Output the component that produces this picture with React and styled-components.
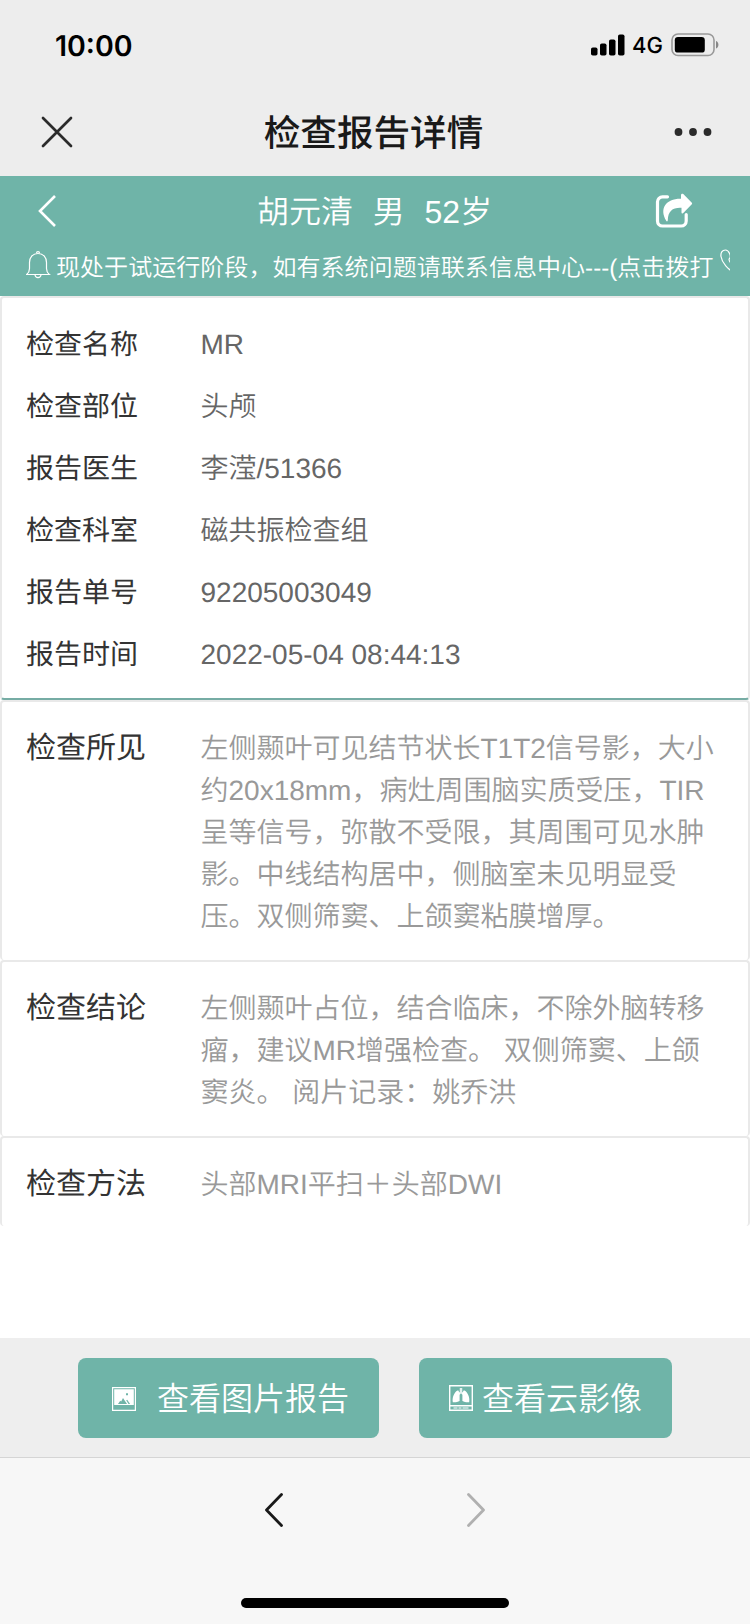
import React from 'react';
import styled, { createGlobalStyle, ThemeProvider } from 'styled-components';

const theme = {
  teal: '#6fb4a8',
  chrome: '#ededed',
  line: '#e9e9e9',
  black: '#191919',
  label: '#333',
  value: '#666',
  muted: '#999',
};

const GlobalStyle = createGlobalStyle`
  * {
    box-sizing: border-box;
  }

  body {
    margin: 0;
    background: #fff;
    font-family: 'Liberation Sans', 'Noto Sans CJK SC', sans-serif;
    text-rendering: geometricPrecision;
  }

  svg {
    display: block;
    flex: none;
  }
`;

const Page = styled.div`
  display: flex;
  flex-direction: column;
  width: 750px;
  height: 1624px;
  overflow: hidden;
`;

const StatusBar = styled.div`
  display: flex;
  align-items: center;
  justify-content: space-between;
  height: 88px;
  padding: 2px 31px 0 55px;
  background: ${props => props.theme.chrome};
  color: #000;
  font-family: Inter, sans-serif;
`;

const Clock = styled.div`
  font-size: 28.5px;
  font-weight: 600;
`;

const StatusIcons = styled.div`
  display: flex;
  align-items: center;
`;

const Network = styled.span`
  margin: 2px 8px 0 7px;
  font-size: 22px;
  font-weight: 500;
`;

const NavBar = styled.nav`
  display: flex;
  align-items: center;
  justify-content: space-between;
  height: 88px;
  padding: 0 38px 1px 41px;
  background: ${props => props.theme.chrome};
`;

const NavTitle = styled.h1`
  margin: 0;
  padding-top: 4px;
  color: ${props => props.theme.black};
  font-size: 36.6px;
  font-weight: 500;
  line-height: 50px;
`;

const Header = styled.header`
  height: 120px;
  background: ${props => props.theme.teal};
  color: #fff;
`;

const PatientBar = styled.div`
  display: flex;
  align-items: center;
  height: 70px;
  padding: 0 57px 0 38px;
`;

const Patient = styled.div`
  flex: 1;
  padding: 1px 0 0 201px;
  font-size: 32px;
  font-weight: 350;
  line-height: 44px;
  word-spacing: 1px;
  white-space: pre;
`;

const Notice = styled.div`
  display: flex;
  align-items: center;
  height: 38px;
  margin: 0 20px 0 26px;
  overflow: hidden;
`;

const NoticeText = styled.span`
  margin: 0 7px 0 5px;
  font-size: 24px;
  font-weight: 350;
  letter-spacing: 0.05px;
  white-space: nowrap;
`;

const Content = styled.main`
  flex: 1;
`;

const Card = styled.section`
  padding: ${props => (props.$summary ? '16px 24px 12px' : '26px 24px 22px')};
  border: 2px solid ${props => props.theme.line};
  border-bottom: ${props => (props.$summary ? '2px solid #76aca4' : 'none')};
  border-radius: 4px;

  &:last-child {
    padding-bottom: 20px;
  }
`;

const Row = styled.div`
  display: flex;
  line-height: ${props => (props.$summary ? 62 : 42)}px;
`;

const Label = styled.div`
  flex: none;
  width: 174.5px;
  color: ${props => props.theme.label};
  font-size: ${props => (props.$large ? 30 : 28)}px;
`;

const Value = styled.div`
  flex: 1;
  color: ${props => props.theme.value};
  font-size: 28px;
  font-weight: 350;
`;

const Description = styled(Value)`
  color: ${props => props.theme.muted};
`;

const Actions = styled.div`
  display: flex;
  gap: 40px;
  height: 119px;
  padding: 20px 78px;
  background: #eee;
`;

const Button = styled.button`
  display: flex;
  align-items: center;
  gap: ${props => props.$gap}px;
  width: ${props => props.$width}px;
  height: 80px;
  padding: 0 0 0 ${props => props.$inset}px;
  border: none;
  border-radius: 8px;
  background: ${props => props.theme.teal};
  color: #fff;
  font-family: inherit;
  font-size: 32px;
  font-weight: 350;
  white-space: nowrap;
`;

const ButtonText = styled.span`
  padding-bottom: 5px;
`;

const BrowserBar = styled.footer`
  display: flex;
  flex-direction: column;
  align-items: center;
  justify-content: space-between;
  height: 167px;
  padding: 35px 0 16px;
  border-top: 1px solid #d5d5d5;
  background: #f7f7f7;
`;

const BrowserNav = styled.div`
  display: flex;
  gap: 184px;
`;

const HomeIndicator = styled.div`
  width: 268px;
  height: 10px;
  border-radius: 5px;
  background: #000;
`;

const SignalIcon = () => (
  <svg width="34" height="22" viewBox="0 0 34 22">
    <rect x="0" y="13.5" width="6.5" height="8" rx="1.8" />
    <rect x="9" y="9.5" width="6.5" height="12" rx="1.8" />
    <rect x="18" y="5.5" width="6.5" height="16" rx="1.8" />
    <rect x="27" y="0.5" width="6.5" height="21" rx="1.8" />
  </svg>
);

const BatteryIcon = () => (
  <svg width="48" height="24" viewBox="0 0 48 24">
    <rect x="1" y="1" width="42" height="21.5" rx="6" fill="none" stroke="#999" strokeWidth="1.6" />
    <rect x="3.8" y="4" width="30" height="15.6" rx="3.2" />
    <path d="M45 8c3.2 1 3.2 6.500 0 7.500z" fill="#888" />
  </svg>
);

const CloseIcon = () => (
  <svg width="32" height="32" viewBox="0 0 32 32" fill="none" stroke="#2b2b2b" strokeWidth="2.7" strokeLinecap="round">
    <path d="M2 2l28 28M30 2L2 30" />
  </svg>
);

const MoreIcon = () => (
  <svg width="38" height="10" viewBox="0 0 38 10" fill="#2b2b2b">
    <circle cx="4.500" cy="5" r="3.900" />
    <circle cx="19" cy="5" r="3.900" />
    <circle cx="33.500" cy="5" r="3.900" />
  </svg>
);

const Chevron = ({ color, right }) => (
  <svg width="18" height="34" viewBox="0 0 18 34" fill="none" stroke={color} strokeWidth="2.8" strokeLinecap="round" strokeLinejoin="round">
    <path d={right ? 'M1.500 1.500L16.500 17 1.500 32.500' : 'M16.500 1.500L1.500 17l15 15.500'} />
  </svg>
);

const BackIcon = () => (
  <svg width="18" height="32" viewBox="0 0 18 32" fill="none" stroke="#fff" strokeWidth="2.6">
    <path d="M17 1L2 16l15 15" />
  </svg>
);

const ShareIcon = () => (
  <svg width="38" height="36" viewBox="0 0 38 36">
    <path
      d="M12.500 3.800H7.500a5 5 0 0 0-5 5V28a5 5 0 0 0 5 5h18.700a5 5 0 0 0 5-5v-6.500"
      fill="none"
      stroke="#fff"
      strokeWidth="3.200"
      strokeLinecap="round"
    />
    <path
      d="M26.500 1c.6-.5 1.200-.4 1.800.1l8.300 8.400c.7.700.7 1.300 0 2l-8.300 8.500c-.8.8-1.800.4-1.800-.8v-4.400c-8.500-.5-13.500 3-13.700 12.500 0 1.200-1 1.500-1.600.5C4 15.500 11 5.500 26 5.800V2.200c0-.5.1-.9.500-1.200z"
      fill="#fff"
    />
  </svg>
);

const BellIcon = () => (
  <svg width="25" height="28" viewBox="0 0 25 28" fill="none" stroke="#fff" strokeWidth="1.200">
    <path d="M12 2.500c-5.500 0-8.500 4-8.500 9v6c0 3-1 4.500-2.800 6h22.600c-1.800-1.500-2.800-3-2.800-6v-6c0-5-3-9-8.500-9z" />
    <path d="M10.500 2.200c0-2 3-2 3 0M9 24c.5 3.500 5.500 3.500 6 0" />
  </svg>
);

const PhoneIcon = () => (
  <svg width="24" height="34" viewBox="0 0 24 34" fill="none" stroke="#fff" strokeWidth="1.200">
    <path d="M9.500 10.500c2-2-.5-8.500-4-8.500C2 2 .500 5 1 8.500 2 15 8 21.500 15 25c3 1.500 7-1 7-4 0-2.500-5-4.500-6.500-3-1.500 1.500-8-5.500-6-7.500z" />
  </svg>
);

const PictureIcon = () => (
  <svg width="24" height="26" viewBox="0 -2 24 26">
    <path d="M.6.600h22.800v22.800H.6z" fill="none" stroke="#fff" strokeWidth="1.200" />
    <path
      d="M2.200 2.200h19.600v15.800H2.200zM14 6.200v2h2v-2zM6 17l2.200-3.200 1 .6L11 11l4 6zM14.200 13.200l1-.4 2.900 4.200h-1.600z"
      fill="#fff"
      fillRule="evenodd"
    />
  </svg>
);

const LungsIcon = () => (
  <svg width="24" height="26" viewBox="0 0 24 26" fill="#fff">
    <path d="M.7.700h22.600v24.600H.7zM.7 20.700h22.600" fill="none" stroke="#fff" strokeWidth="1.400" />
    <path d="M10.800 3h1v5.500l-1.200 1.300V16c-2 1-4.500 1.500-6.800 1.200C3 13 5 7.500 8.500 5.600c1-.2 1.400.3 1.500 2l.8-.6z" />
    <path d="M13.200 3h-1v5.500l1.200 1.300V16c2 1 4.500 1.500 6.800 1.200.8-4.200-1.200-9.700-4.700-11.600-1-.2-1.400.3-1.500 2l-.8-.6z" />
    <path d="M4.500 22.500h4v1h-4zM9.500 22.500h3v1h-3zM13.500 22.500h6v1h-6z" />
  </svg>
);

const summary = [
  ['检查名称', 'MR'],
  ['检查部位', '头颅'],
  ['报告医生', '李滢/51366'],
  ['检查科室', '磁共振检查组'],
  ['报告单号', '92205003049'],
  ['报告时间', '2022-05-04 08:44:13'],
];

const findings = [
  {
    label: '检查所见',
    text:
      '左侧颞叶可见结节状长T1T2信号影，大小约20x18mm，病灶周围脑实质受压，TIR呈等信号，弥散不受限，其周围可见水肿影。中线结构居中，侧脑室未见明显受压。双侧筛窦、上颌窦粘膜增厚。',
  },
  {
    label: '检查结论',
    text: '左侧颞叶占位，结合临床，不除外脑转移瘤，建议MR增强检查。 双侧筛窦、上颌窦炎。 阅片记录：姚乔洪',
  },
  { label: '检查方法', text: '头部MRI平扫＋头部DWI' },
];

const App = () => (
  <ThemeProvider theme={theme}>
    <GlobalStyle />
    <Page>
      <StatusBar>
        <Clock>10:00</Clock>
        <StatusIcons>
          <SignalIcon />
          <Network>4G</Network>
          <BatteryIcon />
        </StatusIcons>
      </StatusBar>
      <NavBar>
        <CloseIcon />
        <NavTitle>检查报告详情</NavTitle>
        <MoreIcon />
      </NavBar>

      <Header>
        <PatientBar>
          <BackIcon />
          <Patient>{'胡元清  男  52岁'}</Patient>
          <ShareIcon />
        </PatientBar>
        <Notice>
          <BellIcon />
          <NoticeText>现处于试运行阶段，如有系统问题请联系信息中心---(点击拨打</NoticeText>
          <PhoneIcon />
        </Notice>
      </Header>

      <Content>
        <Card $summary>
          {summary.map(([label, value]) => (
            <Row key={label} $summary>
              <Label>{label}</Label>
              <Value>{value}</Value>
            </Row>
          ))}
        </Card>
        {findings.map(({ label, text }) => (
          <Card key={label}>
            <Row>
              <Label $large>{label}</Label>
              <Description>{text}</Description>
            </Row>
          </Card>
        ))}
      </Content>

      <Actions>
        <Button $width={301} $inset={34} $gap={21}>
          <PictureIcon />
          <ButtonText>查看图片报告</ButtonText>
        </Button>
        <Button $width={253} $inset={30} $gap={9}>
          <LungsIcon />
          <ButtonText>查看云影像</ButtonText>
        </Button>
      </Actions>

      <BrowserBar>
        <BrowserNav>
          <Chevron color="#191919" />
          <Chevron color="#b0b0b0" right />
        </BrowserNav>
        <HomeIndicator />
      </BrowserBar>
    </Page>
  </ThemeProvider>
);

export default App;
